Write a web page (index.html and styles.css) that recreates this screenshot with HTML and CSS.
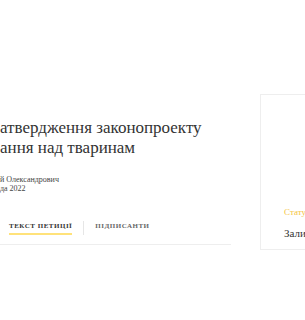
FILE: index.html
```html
<!DOCTYPE html>
<html lang="uk">
<head>
  <meta charset="UTF-8">
  <meta name="viewport" content="width=device-width, initial-scale=1.0">
  <title>Петиція</title>
  <link rel="stylesheet" href="styles.css">
</head>
<body>
  <div class="page">
    <div class="petition">
      <h1 class="title">атвердження законопроекту<br>ання над тваринам</h1>
      <div class="meta">
        <p>й Олександрович</p>
        <p>да 2022</p>
      </div>
      <div class="tabs">
        <span class="tab active">Текст петиції</span>
        <span class="divider"></span>
        <span class="tab">Підписанти</span>
      </div>
    </div>
    <div class="sidebar">
      <p class="status">Статус</p>
      <p class="state">Залишилось</p>
    </div>
  </div>
</body>
</html>
```

FILE: styles.css
```css
body {
  margin: 0;
  background: #fff;
  font-family: 'Liberation Serif', serif;
  color: #333;
  overflow: hidden;
}

.page {
  display: flex;
  height: 320px;
}

.petition {
  width: 231px;
  flex-shrink: 0;
  padding-top: 118px;
}

.title {
  margin: 0;
  font-size: 17px;
  font-weight: normal;
  line-height: 20px;
  white-space: nowrap;
  color: #333;
}

.meta {
  margin-top: 17px;
  font-size: 8px;
  color: #444;
}

.meta p {
  margin: 0;
  line-height: 9px;
}

.tabs {
  display: flex;
  align-items: center;
  margin-top: 28px;
  padding: 0 0 9px 9px;
  border-bottom: 1px solid #eee;
}

.tab {
  font-size: 7px;
  font-weight: bold;
  text-transform: uppercase;
  letter-spacing: 0.5px;
  color: #666;
  padding-bottom: 3px;
  border-bottom: 2px solid transparent;
}

.tab.active {
  color: #333;
  border-bottom-color: #ffe27a;
}

.divider {
  width: 1px;
  height: 14px;
  background: #e6e6e6;
  margin: 0 11px;
}

.sidebar {
  margin: 94px 0 0 29px;
  height: 156px;
  flex: 1;
  border: 1px solid #eee;
  border-right: none;
  padding: 112px 0 0 23px;
  box-sizing: border-box;
  white-space: nowrap;
  overflow: hidden;
}

.status {
  margin: 0;
  font-size: 9px;
  color: #f5c542;
}

.state {
  margin: 10px 0 0;
  font-size: 11px;
  color: #333;
}
```
